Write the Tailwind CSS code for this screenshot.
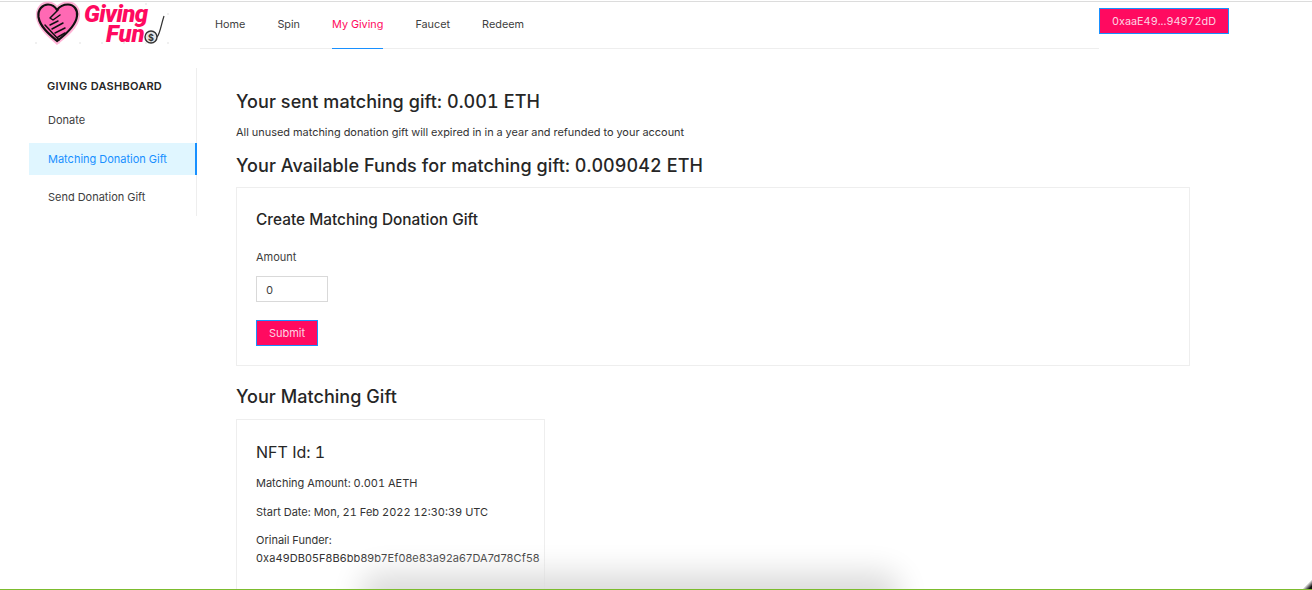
<!DOCTYPE html>
<html lang="en">
<head>
    <meta charset="UTF-8">
    <meta name="viewport" content="width=device-width, initial-scale=1.0">
    <title>Giving Fund</title>
    <script src="https://cdn.jsdelivr.net/npm/@tailwindcss/browser@4"></script>
</head>
<body class="relative w-[1312px] h-[590px] overflow-hidden bg-white pt-px font-['Inter',sans-serif] tabular-nums text-[#262626]">
    <div class="border-t border-t-[#dcdcdc]">
    <!-- Navbar -->
    <header class="flex h-[47px] items-start">
        <a href="#" class="relative block w-[200px] h-[47px] shrink-0">
            <svg class="absolute left-[34px] top-[-1px]" width="140" height="46" viewBox="0 0 140 46">
                <g fill="#dddddd">
                    <circle cx="2" cy="42" r="0.8"/><circle cx="25" cy="42" r="0.8"/><circle cx="46" cy="42" r="0.8"/><circle cx="68" cy="42" r="0.8"/><circle cx="90" cy="42" r="0.8"/><circle cx="112" cy="42" r="0.8"/><circle cx="134" cy="42" r="0.8"/>
                    <circle cx="134" cy="13" r="0.8"/><circle cx="112" cy="3" r="0.8"/>
                </g>
                <path d="M23 42 C15 35 5 27 3.5 16 C2.5 7 8 2 14 2 C18 2 21 4 23 7 C26 3 30 2 34 2 C41 2 45.500 8 44.500 15 C43.500 26 32 35 23 42 Z" fill="#ff69b4" stroke="#ffb3d6" stroke-width="3"/>
                <path d="M23 40 C16 34 6 26 4.500 16 C3.500 8 9 3.500 14 3.500 C18 3.500 21 5.500 23 9 C26 5 30 3.500 34 3.500 C40 3.500 44 9 43 15 C42 25 31 34 23 40 Z" fill="#ff69b4" stroke="#111111" stroke-width="2.200" stroke-linejoin="round"/>
                <path d="M24 9 L16 17 L19 19 L26 14 M11 24 L25 39 M16 24 L24 20 M18 28 L29 22 M21 32 L31 27 M24 36 L31 32" fill="none" stroke="#111111" stroke-width="1.500" stroke-linecap="round" stroke-linejoin="round"/>
            </svg>
            <span class="absolute left-[84px] top-[2px] font-['Roboto',sans-serif] text-[24px] tracking-[-0.6px] leading-[20px] font-black italic text-[#ff0a60]">Giving</span>
            <span class="absolute left-[106px] top-[22px] font-['Roboto',sans-serif] text-[24px] leading-[20px] font-black italic text-[#ff0a60]">Fun</span>
            <svg class="absolute left-[143px] top-[13px]" width="24" height="30" viewBox="0 0 24 30">
                <circle cx="8" cy="22" r="6" fill="#e4e4e4" stroke="#333333" stroke-width="1.400"/>
                <path d="M14 22 C17 19 18 10 21 1" fill="none" stroke="#333333" stroke-width="1.200"/>
                <text x="8" y="25.500" text-anchor="middle" font-size="9" font-weight="700" fill="#333333" font-family="Inter">$</text>
            </svg>
        </a>
        <nav class="flex flex-1 h-[47px] gap-[32px] pl-[15px] border-b border-b-[#eeeeee] text-[10.85px] leading-[44px] text-[#404040]">
            <a href="#">Home</a>
            <a href="#">Spin</a>
            <a href="#" class="h-[47px] text-[#ff0a60] border-b border-b-[#1890ff]">My Giving</a>
            <a href="#">Faucet</a>
            <a href="#">Redeem</a>
        </nav>
        <div class="w-[213px] shrink-0 pt-[5px]">
            <button class="w-[130px] h-[26px] bg-[#ff0a60] border border-[#1890ff] text-[10.85px] text-[#fcd5e3]">0xaaE49...94972dD</button>
        </div>
    </header>

    <div class="flex">
        <!-- Sidebar -->
        <aside class="w-[168px] h-[148px] ml-[29px] mt-[19px] border-r border-r-[#eeeeee] shrink-0 text-[11px]">
            <h3 class="pl-[18px] pt-[11px] leading-[14px] font-semibold tracking-[0.25px] text-[#262626]">GIVING DASHBOARD</h3>
            <a href="#" class="block pl-[19px] mt-[3px] h-[38px] leading-[48px] text-[#404040]">Donate</a>
            <a href="#" class="block pl-[19px] mt-[9px] -mr-px h-[32px] leading-[32px] bg-[#e0f6ff] text-[#1890ff] border-r-2 border-r-[#1890ff]">Matching Donation Gift</a>
            <a href="#" class="block pl-[19px] h-[44px] leading-[44px] text-[#404040]">Send Donation Gift</a>
        </aside>

        <!-- Main -->
        <main class="ml-[39px] w-[954px] pt-[40px]">
            <h2 class="text-[18px] tracking-[0.08px] leading-[26px] font-medium">Your sent matching gift: 0.001 ETH</h2>
            <p class="mt-[9px] text-[10.95px] leading-[16px] text-[#333333]">All unused matching donation gift will expired in in a year and refunded to your account</p>
            <h2 class="mt-[13px] text-[18px] tracking-[0.08px] leading-[26px] font-medium">Your Available Funds for matching gift: 0.009042 ETH</h2>

            <section class="mt-[8px] h-[179px] border border-[#eeeeee] px-[19px] pt-[21px]">
                <h3 class="text-[15.4px] leading-[22px] font-medium">Create Matching Donation Gift</h3>
                <label class="block mt-[18px] text-[11px] leading-[16px] text-[#404040]">Amount</label>
                <input type="text" value="0" class="block mt-[11px] w-[72px] h-[26px] border border-[#d9d9d9] pl-[9px] pt-[2px] text-[11px] text-[#404040]">
                <button class="block mt-[18px] w-[62px] h-[26px] bg-[#ff0a60] border border-[#1890ff] text-[11px] text-[#fcd5e3]">Submit</button>
            </section>

            <h2 class="mt-[18px] text-[18px] tracking-[0.05px] leading-[26px] font-medium">Your Matching Gift</h2>

            <section class="mt-[9px] w-[309px] h-[200px] border border-[#eeeeee] pl-[19px] pt-[21px] text-[11px] text-[#333333]">
                <h3 class="text-[16px] leading-[22px] text-[#262626]">NFT Id: 1</h3>
                <p class="mt-[12px] leading-[16px]">Matching Amount: 0.001 AETH</p>
                <p class="mt-[13px] leading-[16px]">Start Date: Mon, 21 Feb 2022 12:30:39 UTC</p>
                <p class="mt-[11px] leading-[18px]">Orinail Funder:<br><span class="[font-variant-numeric:normal] tracking-[0.12px]">0xa49DB05F8B6bb89b7Ef08e83a92a67DA7d78Cf58</span></p>
            </section>
        </main>
    </div>
    </div>

    <!-- window shadow and frame edge along the bottom -->
    <div class="absolute left-[385px] top-[596px] w-[490px] h-[10px] rounded-full shadow-[0_0_30px_24px_#dcdcdc] pointer-events-none"></div>
    <div class="absolute left-0 bottom-0 w-full h-px bg-[#7cbc2e]"></div>
    <div class="absolute right-0 bottom-px w-[10px] h-[10px] bg-[linear-gradient(135deg,transparent_50%,#111111_85%)]"></div>
</body>
</html>
